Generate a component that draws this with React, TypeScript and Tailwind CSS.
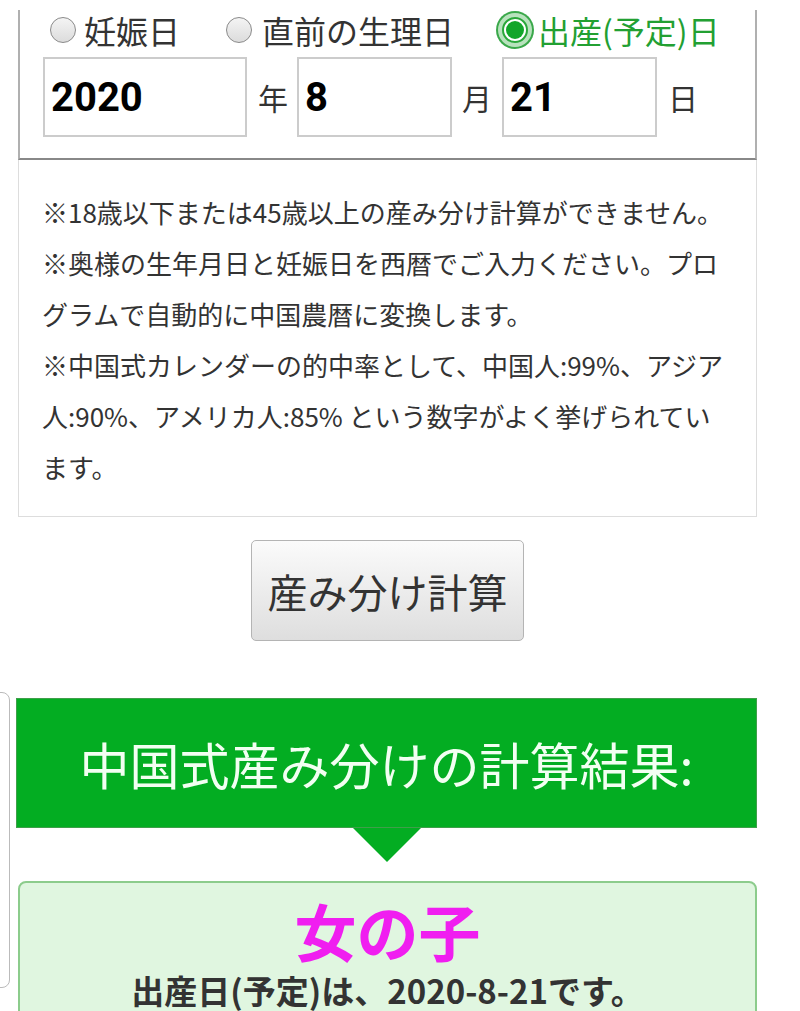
import React from "react";

const cjk = "font-['Noto_Sans_CJK_JP','Noto_Sans',sans-serif]";

function GrayRadio() {
  return (
    <span className="block h-[26px] w-[26px] shrink-0 rounded-full border-[1.5px] border-[#8a8a8a] bg-gradient-to-b from-[#f4f4f4] to-[#dcdcdc]" />
  );
}

function CheckedRadio() {
  return (
    <span className="flex h-[26px] w-[26px] shrink-0 items-center justify-center rounded-full border-2 border-[#2aa83a] bg-white shadow-[0_0_0_4px_#b8e2bd,0_0_0_6px_#3aa84a]">
      <span className="block h-[18px] w-[18px] rounded-full bg-[#12a52a]" />
    </span>
  );
}

function DateInput({ value, width }: { value: string; width: string }) {
  return (
    <input
      readOnly
      value={value}
      className={`${width} h-[80px] shrink-0 border-2 border-[#cccccc] bg-white pl-[6px] font-['Roboto',sans-serif] text-[40px] font-bold text-black outline-none`}
    />
  );
}

const notes = [
  "※18歳以下または45歳以上の産み分け計算ができません。",
  "※奥様の生年月日と妊娠日を西暦でご入力ください。プロ",
  "グラムで自動的に中国農暦に変換します。",
  "※中国式カレンダーの的中率として、中国人:99%、アジア",
  "人:90%、アメリカ人:85% という数字がよく挙げられてい",
  "ます。",
];

export default function App() {
  return (
    <div className={`relative h-[1011px] w-[800px] overflow-hidden bg-white ${cjk}`}>
      {/* date form */}
      <div className="ml-[18px] w-[739px] border-x-2 border-b-2 border-x-[#b0b0b0] border-b-[#888888] pb-[21px]">
        <div className="mt-[10px] flex h-[40px] items-center pl-[30px] text-[32px] leading-none">
          <GrayRadio />
          <span className="ml-[8px] text-[#333333]">妊娠日</span>
          <span className="ml-[46px]">
            <GrayRadio />
          </span>
          <span className="ml-[10px] text-[#333333]">直前の生理日</span>
          <span className="ml-[48px]">
            <CheckedRadio />
          </span>
          <span className="ml-[10px] text-[#22a032]">出産(予定)日</span>
        </div>
        <div className="mt-[7px] flex items-center pl-[23px] text-[30px] leading-none text-[#333333]">
          <DateInput value="2020" width="w-[204px]" />
          <span className="ml-[11px]">年</span>
          <span className="ml-[9px]">
            <DateInput value="8" width="w-[155px]" />
          </span>
          <span className="ml-[10px]">月</span>
          <span className="ml-[10px]">
            <DateInput value="21" width="w-[155px]" />
          </span>
          <span className="ml-[11px]">日</span>
        </div>
      </div>

      {/* notes */}
      <div className="ml-[18px] w-[739px] border-x border-b border-[#dddddd] pb-[24px] pl-[23px] pt-[26px] text-[26px] leading-[51px] text-[#333333]">
        {notes.map((line) => (
          <div key={line} className="whitespace-nowrap">
            {line}
          </div>
        ))}
      </div>

      {/* submit */}
      <div className="ml-[18px] mt-[23px] flex w-[739px] justify-center">
        <button className="h-[101px] w-[273px] rounded-[5px] border border-[#b4b4b4] bg-gradient-to-b from-[#fbfbfb] to-[#dedede] text-[40px] leading-none text-[#333333]">
          産み分け計算
        </button>
      </div>

      {/* result */}
      <div className="ml-[16px] mt-[57px] w-[741px]">
        <div className="flex h-[130px] items-center justify-center border border-[#3f9f4a] bg-[#03ad22] text-[50px] leading-none text-[#f2fff2]">
          中国式産み分けの計算結果:
        </div>
        <div className="mx-auto h-0 w-0 border-x-[34px] border-t-[34px] border-x-transparent border-t-[#03ad22]" />
      </div>
      <div className="ml-[18px] mt-[19px] w-[739px] rounded-[8px] border-2 border-[#8ccc8c] bg-[#e0f6e0] pb-[30px] pt-[14px] text-center">
        <div className="text-[62px] font-bold leading-[66px] text-[#f01ef0]">女の子</div>
        <div className="mt-[10px] text-[33px] font-bold leading-[34px] text-[#333333]">
          出産日(予定)は、2020-8-21です。
        </div>
      </div>

      {/* edge of a side panel */}
      <div className="absolute left-[-12px] top-[692px] h-[296px] w-[22px] rounded-[8px] border border-[#bbbbbb] bg-white" />
    </div>
  );
}
